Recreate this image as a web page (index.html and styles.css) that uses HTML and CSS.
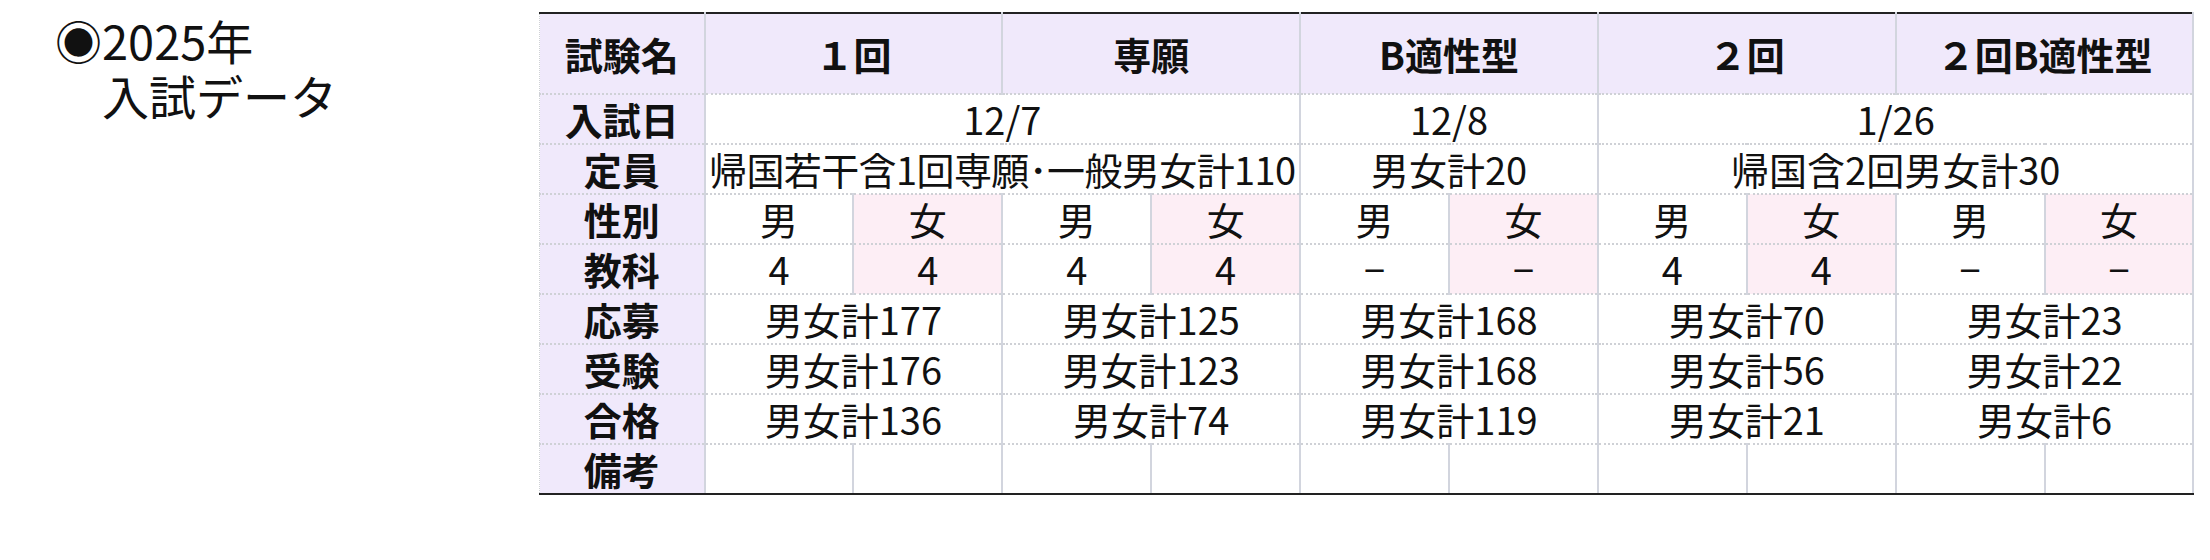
FILE: index.html
```html
<!DOCTYPE html>
<html lang="ja">
<head>
<meta charset="utf-8">
<title>2025年 入試データ</title>
<link rel="stylesheet" href="styles.css">
</head>
<body>
<div class="page">
  <h2 class="title"><span class="t-line">◉2025年</span><span class="t-line">　入試データ</span></h2>
  <table class="data">
    <colgroup>
      <col class="c-label">
      <col class="c-sub"><col class="c-sub"><col class="c-sub"><col class="c-sub"><col class="c-sub">
      <col class="c-sub"><col class="c-sub"><col class="c-sub"><col class="c-sub"><col class="c-sub">
    </colgroup>
    <tr class="head">
      <th class="label">試験名</th>
      <th colspan="2">１回</th>
      <th colspan="2">専願</th>
      <th colspan="2">B適性型</th>
      <th colspan="2">２回</th>
      <th colspan="2">２回B適性型</th>
    </tr>
    <tr>
      <th class="label">入試日</th>
      <td colspan="4">12/7</td>
      <td colspan="2">12/8</td>
      <td colspan="4">1/26</td>
    </tr>
    <tr>
      <th class="label">定員</th>
      <td colspan="4" class="tight">帰国若干含1回専願･一般男女計110</td>
      <td colspan="2">男女計20</td>
      <td colspan="4">帰国含2回男女計30</td>
    </tr>
    <tr>
      <th class="label">性別</th>
      <td>男</td><td class="f">女</td>
      <td>男</td><td class="f">女</td>
      <td>男</td><td class="f">女</td>
      <td>男</td><td class="f">女</td>
      <td>男</td><td class="f">女</td>
    </tr>
    <tr>
      <th class="label">教科</th>
      <td>4</td><td class="f">4</td>
      <td>4</td><td class="f">4</td>
      <td>−</td><td class="f">−</td>
      <td>4</td><td class="f">4</td>
      <td>−</td><td class="f">−</td>
    </tr>
    <tr>
      <th class="label">応募</th>
      <td colspan="2">男女計177</td>
      <td colspan="2">男女計125</td>
      <td colspan="2">男女計168</td>
      <td colspan="2">男女計70</td>
      <td colspan="2">男女計23</td>
    </tr>
    <tr>
      <th class="label">受験</th>
      <td colspan="2">男女計176</td>
      <td colspan="2">男女計123</td>
      <td colspan="2">男女計168</td>
      <td colspan="2">男女計56</td>
      <td colspan="2">男女計22</td>
    </tr>
    <tr>
      <th class="label">合格</th>
      <td colspan="2">男女計136</td>
      <td colspan="2">男女計74</td>
      <td colspan="2">男女計119</td>
      <td colspan="2">男女計21</td>
      <td colspan="2">男女計6</td>
    </tr>
    <tr class="last">
      <th class="label">備考</th>
      <td></td><td></td><td></td><td></td><td></td>
      <td></td><td></td><td></td><td></td><td></td>
    </tr>
  </table>
</div>
</body>
</html>
```

FILE: styles.css
```css
html, body {
  margin: 0;
  padding: 0;
  background: #ffffff;
}

body {
  font-family: "Noto Sans CJK JP", "Noto Sans", sans-serif;
  color: #111111;
}

.page {
  display: flex;
  align-items: flex-start;
  padding: 12px 0 0 55px;
}

.title {
  width: 484px;
  flex: none;
  margin: 0;
  font-size: 47px;
  font-weight: 400;
  line-height: 55px;
  letter-spacing: 0;
}

.t-line {
  display: block;
  height: 55px;
}

.data {
  width: 1654px;
  flex: none;
  border-collapse: collapse;
  table-layout: fixed;
  border-top: 2px solid #222222;
  border-bottom: 2px solid #222222;
  font-size: 38px;
  line-height: 1;
}

.c-label { width: 165px; }
.c-sub { width: 148.9px; }

.data th,
.data td {
  height: 48px;
  padding: 0;
  text-align: center;
  vertical-align: middle;
  white-space: nowrap;
  border-left: 2px solid #d2d5de;
  border-right: 2px solid #d2d5de;
  border-top: 2px dotted #cfd1d6;
  border-bottom: 2px dotted #cfd1d6;
  background: #ffffff;
  font-weight: 400;
}

.data tr.head th {
  height: 79px;
  background: #f0e9fb;
  font-weight: 700;
  border-top: 2px solid #222222;
}

.data tr.last th,
.data tr.last td {
  border-bottom: 2px solid #222222;
}

.data th.label {
  background: #f0e9fb;
  font-weight: 700;
  border-left: 1px dotted #cfd1d6;
}

.data td.f {
  background: #fdeef5;
}

.data td.tight {
  letter-spacing: -0.6px;
}
```
